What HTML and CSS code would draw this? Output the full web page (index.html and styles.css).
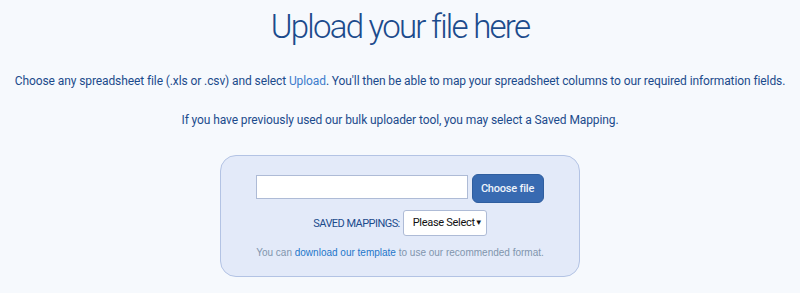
FILE: index.html
```html
<!DOCTYPE html>
<html lang="en">
<head>
    <meta charset="UTF-8">
    <title>Upload your file here</title>
    <link rel="stylesheet" href="styles.css">
</head>
<body>
    <div class="page">
        <h1 class="title">Upload your file here</h1>
        <p class="intro">Choose any spreadsheet file (.xls or .csv) and select <span class="accent">Upload</span>. You'll then be able to map your spreadsheet columns to our required information fields.</p>
        <p class="intro">If you have previously used our bulk uploader tool, you may select a Saved Mapping.</p>

        <div class="upload-box">
            <div class="file-row">
                <div class="file-field"></div>
                <button class="choose-btn">Choose file</button>
            </div>
            <div class="mapping-row">
                <span class="mapping-label">SAVED MAPPINGS:</span>
                <div class="select">Please Select<span class="arrow">&#9660;</span></div>
            </div>
            <p class="note">You can <a href="#" class="note-link">download our template</a> to use our recommended format.</p>
        </div>
    </div>
</body>
</html>
```

FILE: styles.css
```css
* {
    margin: 0;
    padding: 0;
    box-sizing: border-box;
}

body {
    font-family: Roboto, 'Liberation Sans', sans-serif;
    background: #f6f9fd;
    color: #1c4b8c;
}

.page {
    padding-top: 8px;
    text-align: center;
}

.title {
    font-weight: 300;
    font-size: 33px;
    line-height: 38px;
    letter-spacing: -1.75px;
    color: #1c4b8c;
    margin-bottom: 27px;
}

.intro {
    font-size: 12px;
    line-height: 16px;
    letter-spacing: -0.1px;
    margin-bottom: 23px;
    white-space: nowrap;
}

.accent {
    color: #3d7ccc;
}

.upload-box {
    width: 360px;
    margin: 27px auto 0;
    padding: 18px 0 17px;
    background: #e3eaf9;
    border: 1px solid #b3c3e4;
    border-radius: 16px;
}

.file-row {
    display: flex;
    justify-content: center;
    align-items: flex-start;
    gap: 4px;
    padding-right: 1px;
}

.file-field {
    width: 212px;
    height: 24px;
    margin-top: 1px;
    background: #fff;
    border: 1px solid #aebbd6;
}

.choose-btn {
    width: 72px;
    height: 29px;
    background: #386ab1;
    color: #eef3fb;
    border: 1px solid #2f5e9f;
    border-radius: 6px;
    font-family: Roboto, sans-serif;
    font-size: 11px;
    font-weight: 500;
    letter-spacing: -0.2px;
}

.mapping-row {
    display: flex;
    justify-content: center;
    align-items: center;
    gap: 3px;
    margin-top: 7px;
}

.mapping-label {
    font-size: 11px;
    letter-spacing: -0.55px;
    color: #1c4b8c;
}

.select {
    width: 84px;
    height: 26px;
    background: #fff;
    border: 1px solid #aebbd6;
    border-radius: 3px;
    color: #111;
    font-size: 11px;
    letter-spacing: -0.3px;
    line-height: 24px;
    padding-left: 9px;
    text-align: left;
    white-space: nowrap;
}

.arrow {
    font-size: 8px;
    vertical-align: 1px;
}

.note {
    margin-top: 11px;
    font-family: 'Liberation Sans', Arial, sans-serif;
    font-size: 10px;
    line-height: 12px;
    color: #8195ad;
}

.note-link {
    color: #2476c9;
    text-decoration: none;
}
```
